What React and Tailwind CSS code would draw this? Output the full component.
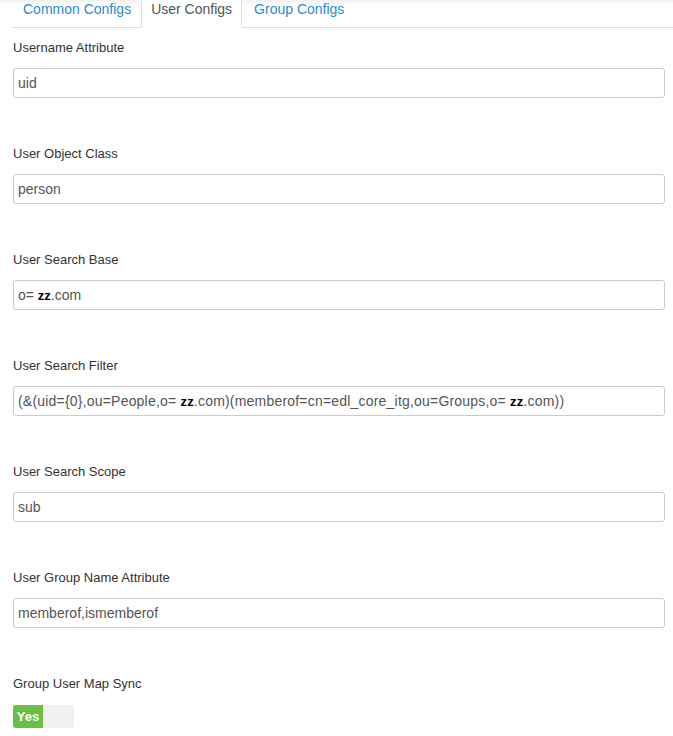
import React from "react";

const Z = () => (
  <>
    {"\u00a0"}
    <span className="font-bold text-black text-[13px]">zz</span>
  </>
);

const fields = [
  { label: "Username Attribute", value: "uid" },
  { label: "User Object Class", value: "person" },
  { label: "User Search Base", value: <>o=<Z />.com</> },
  {
    label: "User Search Filter",
    value: (
      <span className="tracking-[0.2px]">
        (&amp;(uid={"{0}"},ou=People,o=<Z />.com)(memberof=cn=edl_core_itg,ou=Groups,o=<Z />.com))
      </span>
    ),
  },
  { label: "User Search Scope", value: "sub" },
  { label: "User Group Name Attribute", value: "memberof,ismemberof" },
];

export default function App() {
  return (
    <div
      className="w-[673px] h-[736px] bg-white overflow-hidden shadow-[inset_0_6px_6px_-6px_rgba(0,0,0,0.12)]"
      style={{ fontFamily: '"Liberation Sans", Arial, sans-serif' }}
    >
      <ul className="flex ml-[13px] border-b border-[#ddd]">
        <li className="-mb-px">
          <a className="block px-[9px] pb-[8px] leading-[19px] text-[14px] text-[#2a8bd0] border border-transparent border-t-0">
            Common Configs
          </a>
        </li>
        <li className="-mb-px">
          <a className="block px-[9px] pb-[8px] leading-[19px] text-[14px] text-[#555] bg-white border border-[#ddd] border-t-0 border-b-white">
            User Configs
          </a>
        </li>
        <li className="-mb-px">
          <a className="block px-[11px] pb-[8px] leading-[19px] text-[14px] text-[#2a8bd0] border border-transparent border-t-0">
            Group Configs
          </a>
        </li>
      </ul>
      <div className="pl-[13px] pr-[8px] pt-[11px]">
        {fields.map((f, i) => (
          <div key={i} className="mb-[47px]">
            <div className="text-[13px] leading-[17px] text-[#333]">{f.label}</div>
            <div className="mt-[12px] h-[30px] border border-[#ccc] rounded-[3px] px-[4px] flex items-center text-[14px] text-[#555] whitespace-nowrap overflow-hidden">
              <span>{f.value}</span>
            </div>
          </div>
        ))}
        <div>
          <div className="text-[13px] leading-[17px] text-[#333]">Group User Map Sync</div>
          <div className="mt-[13px] flex w-[61px] h-[23px] rounded-[3px] overflow-hidden bg-[#f0f0f0]">
            <div className="w-[30px] bg-[#6cbf45] text-white font-bold text-[13px] flex items-center justify-center">
              Yes
            </div>
          </div>
        </div>
      </div>
    </div>
  );
}
